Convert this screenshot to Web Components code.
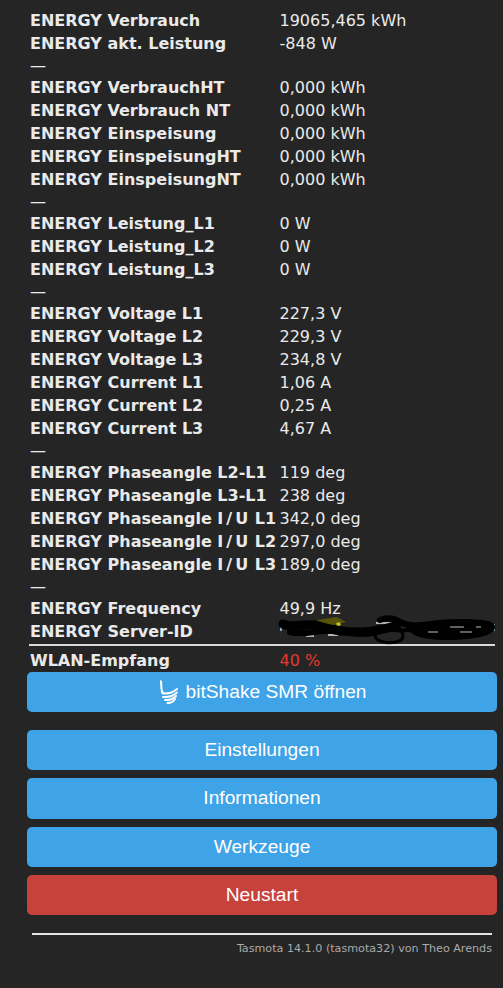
<!DOCTYPE html>
<html lang="de">
    <head>
        <meta charset="UTF-8">
        <title>Tasmota</title>
        <style>
            html, body { margin: 0; background: #252525; }
        </style>
    </head>
    <body>
        <tasmota-page>
            <sensor-row label="ENERGY Verbrauch">19065,465 kWh</sensor-row>
            <sensor-row label="ENERGY akt. Leistung">-848 W</sensor-row>
            <sensor-dash></sensor-dash>
            <sensor-row label="ENERGY VerbrauchHT">0,000 kWh</sensor-row>
            <sensor-row label="ENERGY Verbrauch NT">0,000 kWh</sensor-row>
            <sensor-row label="ENERGY Einspeisung">0,000 kWh</sensor-row>
            <sensor-row label="ENERGY EinspeisungHT">0,000 kWh</sensor-row>
            <sensor-row label="ENERGY EinspeisungNT">0,000 kWh</sensor-row>
            <sensor-dash></sensor-dash>
            <sensor-row label="ENERGY Leistung_L1">0 W</sensor-row>
            <sensor-row label="ENERGY Leistung_L2">0 W</sensor-row>
            <sensor-row label="ENERGY Leistung_L3">0 W</sensor-row>
            <sensor-dash></sensor-dash>
            <sensor-row label="ENERGY Voltage L1">227,3 V</sensor-row>
            <sensor-row label="ENERGY Voltage L2">229,3 V</sensor-row>
            <sensor-row label="ENERGY Voltage L3">234,8 V</sensor-row>
            <sensor-row label="ENERGY Current L1">1,06 A</sensor-row>
            <sensor-row label="ENERGY Current L2">0,25 A</sensor-row>
            <sensor-row label="ENERGY Current L3">4,67 A</sensor-row>
            <sensor-dash></sensor-dash>
            <sensor-row label="ENERGY Phaseangle L2-L1">119 deg</sensor-row>
            <sensor-row label="ENERGY Phaseangle L3-L1">238 deg</sensor-row>
            <sensor-row label="ENERGY Phaseangle <i>I/U</i> L1">342,0 deg</sensor-row>
            <sensor-row label="ENERGY Phaseangle <i>I/U</i> L2">297,0 deg</sensor-row>
            <sensor-row label="ENERGY Phaseangle <i>I/U</i> L3">189,0 deg</sensor-row>
            <sensor-dash></sensor-dash>
            <sensor-row label="ENERGY Frequency">49,9 Hz</sensor-row>
            <sensor-row label="ENERGY Server-ID"><scribble-out></scribble-out></sensor-row>
            <sensor-rule></sensor-rule>
            <sensor-row label="WLAN-Empfang" tone="bad">40 %</sensor-row>

            <menu-button slot="menu" logo space="0">bitShake SMR öffnen</menu-button>
            <menu-button slot="menu" space="17.67">Einstellungen</menu-button>
            <menu-button slot="menu">Informationen</menu-button>
            <menu-button slot="menu">Werkzeuge</menu-button>
            <menu-button slot="menu" tone="danger">Neustart</menu-button>

            <span slot="footer">Tasmota 14.1.0 (tasmota32) von Theo Arends</span>
        </tasmota-page>

        <script>
            class TasmotaPage extends HTMLElement {
                constructor() {
                    super();
                    this.attachShadow({ mode: "open" });
                    this.shadowRoot.innerHTML = /* html */ `
                        <style>
                            :host {
                                display: block;
                                width: 503px;
                                height: 988px;
                                overflow: hidden;
                                box-sizing: border-box;
                                padding: 9px 6px 0 27px;
                                background: #252525;
                                color: #eaeaea;
                                font-family: "DejaVu Sans", Verdana, sans-serif;
                            }
                            .sensors { padding: 0 2px 0 3px; }
                            .menu { display: flex; flex-direction: column; }
                            footer {
                                margin: 18px 5px 0;
                                border-top: 2px solid #e4e4e4;
                                padding-top: 7px;
                                text-align: right;
                                font-size: 11.15px;
                                line-height: 14px;
                                color: #aaa;
                            }
                        </style>
                        <div class="sensors"><slot></slot></div>
                        <div class="menu"><slot name="menu"></slot></div>
                        <footer><slot name="footer"></slot></footer>
                    `;
                }
            }

            class SensorRow extends HTMLElement {
                constructor() {
                    super();
                    this.attachShadow({ mode: "open" });
                    const tone = this.getAttribute("tone") === "bad" ? "#e03a32" : "inherit";
                    this.shadowRoot.innerHTML = /* html */ `
                        <style>
                            :host {
                                display: grid;
                                grid-template-columns: 249.5px 1fr;
                                height: 23px;
                                line-height: 23px;
                                font-size: 16px;
                                white-space: nowrap;
                            }
                            b { font-weight: bold; }
                            /* Verdana setzt I/U breiter als DejaVu */
                            i { font-style: normal; letter-spacing: 3px; margin-right: -2px; }
                            span { color: ${tone}; }
                        </style>
                        <b>${this.getAttribute("label")}</b>
                        <span><slot></slot></span>
                    `;
                }
            }

            class SensorDash extends HTMLElement {
                constructor() {
                    super();
                    this.attachShadow({ mode: "open" });
                    this.shadowRoot.innerHTML = /* html */ `
                        <style>
                            :host {
                                display: block;
                                height: 21px;
                                line-height: 21px;
                                font-size: 16px;
                            }
                        </style>
                        —
                    `;
                }
            }

            class SensorRule extends HTMLElement {
                constructor() {
                    super();
                    this.attachShadow({ mode: "open" });
                    this.shadowRoot.innerHTML = /* html */ `
                        <style>
                            :host {
                                display: block;
                                height: 2px;
                                margin: 1px 0 3px -1px;
                                background: #d9d9d9;
                            }
                        </style>
                    `;
                }
            }

            // Geschwaerzte Server-ID: schwarzes Gekritzel ueber Textresten
            class ScribbleOut extends HTMLElement {
                constructor() {
                    super();
                    this.attachShadow({ mode: "open" });
                    this.shadowRoot.innerHTML = /* html */ `
                        <style>
                            :host { display: block; position: relative; width: 218px; height: 23px; }
                            svg { position: absolute; left: -4px; top: -5px; }
                        </style>
                        <svg width="224" height="30" viewBox="0 0 224 30">
                            <g fill="none" stroke="#dfe6ea" stroke-width="1.5">
                                <path stroke="#9fd0ee" d="M5 9v7M218 9v7"/>
                                <path d="M30 21h8M52 20h10M100 8h24"/>
                            </g>
                            <path d="M41 5l20 -3 9 5-24 6z" fill="#55540a"/>
                            <path d="M60 8l4 -1 1 3-4 2z" fill="#b8b820"/>
                            <g fill="none" stroke="#000" stroke-linecap="round" stroke-linejoin="round">
                                <path stroke-width="9" d="M7 9c10 5 24 -2 36 2s24 6 40 6 26-3 38-7"/>
                                <path stroke-width="6" d="M14 17c14 4 30-3 44-1s24 4 40 2"/>
                                <path stroke-width="6" d="M104 5c8-3 14-2 20 2 8 4 14 4 22 3"/>
                                <path stroke-width="4" d="M110 14c10 2 20 2 32 0"/>
                                <path stroke-width="3" d="M100 18c-4 8 10 11 20 9s8-10 2-14"/>
                            </g>
                            <path fill="#000" d="M130 13c14-9 60-11 82-7 12 3 8 12-4 15-14 4-40 5-54 3-11-1-20-5-24-11z"/>
                            <g fill="none" stroke="#b9c0c4" stroke-width="1">
                                <path d="M152 17h10M174 12h14M184 17h12M200 12h5"/>
                            </g>
                        </svg>
                    `;
                }
            }

            class MenuButton extends HTMLElement {
                constructor() {
                    super();
                    this.attachShadow({ mode: "open" });
                    const danger = this.getAttribute("tone") === "danger";
                    const space = this.getAttribute("space") || 8;
                    const logo = this.hasAttribute("logo") ? /* html */ `
                        <svg width="20" height="24" viewBox="0 0 20 24">
                            <path fill="#fff" d="M2 0l2 1 .5 8c0 2 1 3 2 3.500l-3 1.500c-1-4-1.500-9-1.500-14z"/>
                            <g fill="none" stroke="#fff" stroke-width="2" stroke-linecap="round">
                                <path d="M5 13.500c5 .5 10-1 14-4.500"/>
                                <path d="M5 17c5 .5 10-1 14-4.500"/>
                                <path d="M7 20c4 .5 8-1 11-4"/>
                                <path d="M9.500 23c3 .2 6-1.500 7.500-4"/>
                            </g>
                        </svg>` : "";
                    this.shadowRoot.innerHTML = /* html */ `
                        <style>
                            :host {
                                display: block;
                                margin-top: ${space}px;
                            }
                            button {
                                display: flex;
                                align-items: center;
                                justify-content: center;
                                gap: 8px;
                                width: 100%;
                                height: 40.33px;
                                padding: 0;
                                border: none;
                                border-radius: 5px;
                                background: ${danger ? "#c8423c" : "#3fa3e7"};
                                color: #fff;
                                font: 19.2px "Liberation Sans", Arial, sans-serif;
                            }
                        </style>
                        <button>${logo}<slot></slot></button>
                    `;
                }
            }

            customElements.define("tasmota-page", TasmotaPage);
            customElements.define("sensor-row", SensorRow);
            customElements.define("sensor-dash", SensorDash);
            customElements.define("sensor-rule", SensorRule);
            customElements.define("scribble-out", ScribbleOut);
            customElements.define("menu-button", MenuButton);
        </script>
    </body>
</html>
